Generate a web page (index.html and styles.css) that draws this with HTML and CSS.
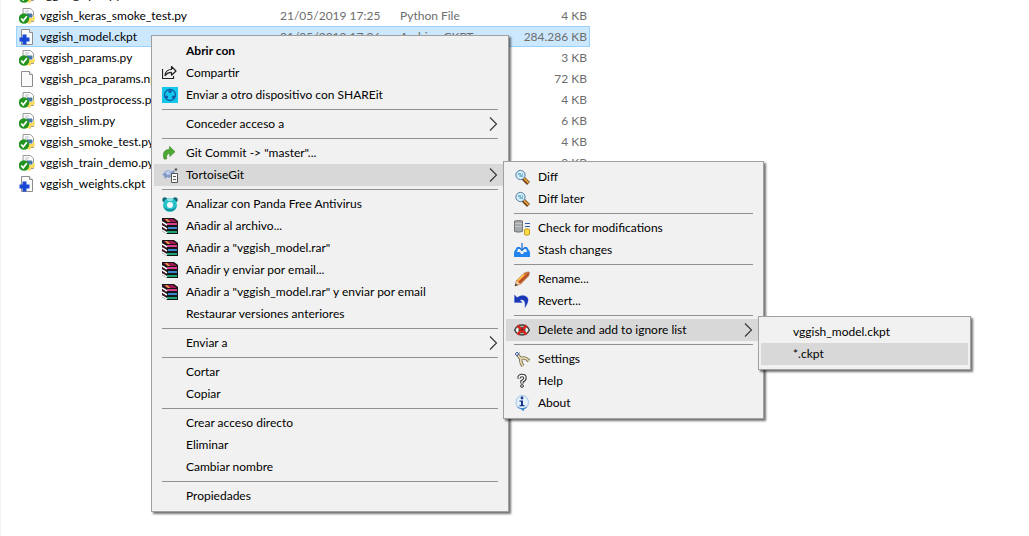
FILE: index.html
```html
<!DOCTYPE html>
<html lang="es">
<head>
<meta charset="utf-8">
<title>Explorador de archivos</title>
<link rel="stylesheet" href="styles.css">
</head>
<body>
<svg class="defs" aria-hidden="true">
  <symbol id="py" viewBox="0 0 16 16">
    <path d="M4 .5h7.500l3 3v10H4z" fill="#fbfbfb" stroke="#9a9a9a"/>
    <path d="M6 3h4M6 5h3" stroke="#b9c3cc"/>
    <path d="M8 5.500h4.500q1 0 1 1.500v2.500H9V11H6V8q0-1 2-1z" fill="#4377a3"/>
    <path d="M14 7.500q1.800 0 1.800 3t-1.800 2.500h-2v2.500H9q-1.500-.5-1.500-2.500V11q0-1 1.500-1h4q1 0 1-1z" fill="#f8dc5c"/>
    <circle cx="5" cy="10.500" r="5.200" fill="#239322"/>
    <path d="M2.200 10.500l2 2.300 3.600-4.600" fill="none" stroke="#fff" stroke-width="1.700"/>
  </symbol>
  <symbol id="page" viewBox="0 0 16 16">
    <path d="M2.500.5h8l3 3v12h-11z" fill="#fafafa" stroke="#8d8d8d"/>
    <path d="M10.500.5v3h3" fill="#fff" stroke="#8d8d8d"/>
  </symbol>
  <symbol id="added" viewBox="0 0 16 16">
    <path d="M2.500.5h8l3 3v12h-11z" fill="#fafafa" stroke="#8d8d8d"/>
    <path d="M10.500.5v3h3" fill="#fff" stroke="#8d8d8d"/>
    <path d="M3.500 5.500h4v3h3v4h-3v3h-4v-3h-3v-4h3z" fill="#1748d4"/>
  </symbol>
  <symbol id="share" viewBox="0 0 16 16">
    <path d="M.5 4v9.500h11V11" fill="none" stroke="#222" stroke-width="1.200"/>
    <path d="M3 10.500q.7-6 6.500-6V1.500L14 6l-4.500 4.200V7.500Q6 7.200 3 10.500z" fill="none" stroke="#222" stroke-width="1.200" stroke-linejoin="round"/>
  </symbol>
  <symbol id="shareit" viewBox="0 0 16 16">
    <path d="M0 0h16v16H0z" fill="#12c8ea"/>
    <circle cx="8" cy="8" r="5.500" fill="none" stroke="#1555a5" stroke-width="1.300"/>
    <circle cx="8" cy="4.500" r="1.600" fill="#1555a5"/><circle cx="4.500" cy="10" r="1.600" fill="#1555a5"/><circle cx="11.500" cy="10" r="1.600" fill="#1555a5"/>
  </symbol>
  <symbol id="commit" viewBox="0 0 16 16">
    <path d="M2 14Q-.5 4.500 7.500 4.500V1.500L13 6.700 7.800 11.500V8.500Q4 8.200 4.600 14z" fill="#4eaa32" stroke="#41852d" stroke-width=".7"/>
  </symbol>
  <symbol id="tortoise" viewBox="0 0 16 16">
    <ellipse cx="6" cy="6.500" rx="4" ry="3.500" fill="#a3b6dc"/>
    <path d="M0 7l3-1 6 3-1 2-3-1-2 2-1-3zM9 5l3-2 1 2-3 2z" fill="#8298c5"/>
    <path d="M4 5l4 2M7 4L5 8" stroke="#dbe3f3" stroke-width=".8"/>
    <circle cx="14" cy="2.500" r="1.300" fill="#555"/>
    <path d="M9.500 6.500h6v9h-6z" fill="#fafafa" stroke="#555"/>
    <path d="M11 9.500h3M11 12.500h3" stroke="#555"/>
  </symbol>
  <symbol id="panda" viewBox="0 0 16 16">
    <circle cx="2.800" cy="3.800" r="2.500" fill="#176b78"/><circle cx="13.200" cy="3.800" r="2.500" fill="#176b78"/>
    <circle cx="8" cy="9" r="5" fill="#f5fcfc" stroke="#28c3ca" stroke-width="4"/>
    <path d="M1.500 10a6.700 6.700 0 0 0 13 0q-2 3.500-6.500 3.500T1.500 10" fill="#14808f"/>
    <path d="M4.500 3.300Q8 1.300 11.500 3.300L10 5H6z" fill="#8ae4e6"/>
  </symbol>
  <symbol id="rar" viewBox="0 0 16 16">
    <path d="M0 0h12l4 3v13H5L0 13z" fill="#161616"/>
    <path d="M1 1h10l4 3H5z" fill="#a01850"/><path d="M3 1h2l3 3H6z" fill="#e8b33d"/>
    <path d="M5 5h10v2H5z" fill="#df3b91"/>
    <path d="M6 9h9v2H6z" fill="#3c86cf"/><path d="M5 13h10v2H5z" fill="#1ba574"/>
    <path d="M0 4l5 3M0 8l5 3M0 12l5 3" stroke="#fff" stroke-width="1.500"/>
    <path d="M0 5.500L4 8.200M0 9.500l4 2.700" stroke="#713" stroke-width=".8"/>
  </symbol>
  <symbol id="diff" viewBox="0 0 16 16">
    <path d="M9 9l5.500 5.500" stroke="#6a401b" stroke-width="4"/><path d="M9.500 8.800l5 5" stroke="#eea43c" stroke-width="1.700"/>
    <circle cx="6.500" cy="6" r="4.600" fill="#d4f1fb" stroke="#547a9f"/>
    <path d="M4 5h3M5.500 7H9M8 5h1" stroke="#297fab"/>
  </symbol>
  <symbol id="check" viewBox="0 0 16 16">
    <path d="M.5 1q4-1 8 0v10.500q-4 1.300-8 0z" fill="#a5a8aa" stroke="#777"/>
    <path d="M1 3.500h7M1 6.500h7" stroke="#c4c7c9"/>
    <path d="M11 3.500h5M11 6.500h5" stroke="#2860ae"/>
    <path d="M10.500 9.500q2.500-1.500 5 0v5q-2.500 1.500-5 0z" fill="#ffdc45" stroke="#c69c20"/>
  </symbol>
  <symbol id="stash" viewBox="0 0 16 16">
    <path d="M3 5h3v2H4L3 10h3l1 2h2l1-2h3l-1-3h-2V5h3l3 5v5H0v-5z" fill="#2284ee"/>
    <path d="M8 1v7M5.300 5.500L8 8.500l2.700-3" fill="none" stroke="#2675cf" stroke-width="1.300"/>
  </symbol>
  <symbol id="rename" viewBox="0 0 16 16">
    <path d="M1 15l1.500-5.500L10 2.500q2-1.500 5-1.500.5 2-.5 4l-8 8z" fill="#ed7a24" stroke="#875036" stroke-width=".7"/>
    <path d="M5.500 12.500l9-8.500V1.500l-4 4-6.500 6z" fill="#aa4930"/><path d="M3.500 9.500L10 3.500" stroke="#ffd15f" stroke-width="1.500"/>
    <path d="M1 15l1.500-5.500 4 3.500z" fill="#f2c998"/><path d="M1 15l.7-2.500L4 14z" fill="#333"/>
  </symbol>
  <symbol id="revert" viewBox="0 0 16 16">
    <path d="M.5 2v7.500h7.800L5.800 7Q12 5 11 14.500 17.500 5 10.500 2.800 6.500 2 3.200 4.600z" fill="#1936b4" stroke="#3555d5" stroke-width=".4"/>
  </symbol>
  <symbol id="ignore" viewBox="0 0 16 16">
    <path d="M.7 8Q3 3 8 3t7.300 5Q13 13 8 13T.7 8z" fill="#f4f4f4" stroke="#3c3c3c" stroke-width="1.400"/>
    <circle cx="8" cy="8" r="3.600" fill="#276b44"/><path d="M3.500 3.500l9 9M12.500 3.500l-9 9" stroke="#d72620" stroke-width="2.600"/>
    <circle cx="8" cy="7.500" r="1.300" fill="#8b1d1c"/>
  </symbol>
  <symbol id="settings" viewBox="0 0 16 16">
    <path d="M3 3l4 5q-1 3 2 7M7 7.500q4-2 8 2.500" fill="none" stroke="#766c55" stroke-width="3.400"/>
    <path d="M3 3l4 5q-1 3 2 7M7 7.500q4-2 8 2.500" fill="none" stroke="#e8d7a8" stroke-width="1.700"/>
    <path d="M1 3l2-2 2 2-2 2zM3 5l2.500-3.500" fill="#c2d0ef" stroke="#53679b"/>
  </symbol>
  <symbol id="help" viewBox="0 0 16 16">
    <path d="M5 5.500q0-3 3-3t3 2.500Q11 7 8 8.500v2" fill="none" stroke="#333" stroke-width="3.400"/>
    <path d="M5 5.200q0-2.700 3-2.700t3 2.500Q11 7 8 8.500v1.700" fill="none" stroke="#fff" stroke-width="1.300"/>
    <circle cx="8" cy="13" r="1.400" fill="#fff" stroke="#333"/>
  </symbol>
  <symbol id="about" viewBox="0 0 16 16">
    <path d="M8 .5a7.300 6.800 0 0 1 2 13L9.500 16 7 13.600A7.300 6.800 0 0 1 8 .5z" fill="#e4f1fd" stroke="#9cc2e8"/>
    <path d="M2.500 11.500q5.500 3.500 11 0-1 2-3.500 2.500L9.500 16 7 14q-3-.5-4.500-2.500z" fill="#2f78c4"/>
    <circle cx="8" cy="3" r="1.400" fill="#17378c"/><path d="M5.500 5.500H9V10h1.500v1.200h-5V10H7V6.700H5.500z" fill="#17378c"/>
  </symbol>
  <symbol id="arrow" viewBox="0 0 16 16">
    <path d="M5 1.500L11.500 8 5 14.500" fill="none" stroke="#333" stroke-width="1.100"/>
  </symbol>
</svg>

<main class="explorer">
  <table class="files">
    <colgroup><col class="col-name"><col class="col-date"><col class="col-type"><col class="col-size"></colgroup>
    <tbody>
      <tr><td><span class="file"><svg><use href="#py"/></svg>vggish_input.py</span></td><td></td><td></td><td></td></tr>
      <tr><td><span class="file"><svg><use href="#py"/></svg>vggish_keras_smoke_test.py</span></td><td>21/05/2019 17:25</td><td>Python File</td><td>4 KB</td></tr>
      <tr class="selected"><td><span class="file"><svg><use href="#added"/></svg>vggish_model.ckpt</span></td><td>21/05/2019 17:26</td><td>Archivo CKPT</td><td>284.286 KB</td></tr>
      <tr><td><span class="file"><svg><use href="#py"/></svg>vggish_params.py</span></td><td></td><td></td><td>3 KB</td></tr>
      <tr><td><span class="file"><svg><use href="#page"/></svg>vggish_pca_params.npz</span></td><td></td><td></td><td>72 KB</td></tr>
      <tr><td><span class="file"><svg><use href="#py"/></svg>vggish_postprocess.py</span></td><td></td><td></td><td>4 KB</td></tr>
      <tr><td><span class="file"><svg><use href="#py"/></svg>vggish_slim.py</span></td><td></td><td></td><td>6 KB</td></tr>
      <tr><td><span class="file"><svg><use href="#py"/></svg>vggish_smoke_test.py</span></td><td></td><td></td><td>4 KB</td></tr>
      <tr><td><span class="file"><svg><use href="#py"/></svg>vggish_train_demo.py</span></td><td></td><td></td><td>9 KB</td></tr>
      <tr><td><span class="file"><svg><use href="#added"/></svg>vggish_weights.ckpt</span></td><td></td><td></td><td></td></tr>
    </tbody>
  </table>

  <ul class="menu context">
    <li><button class="item default"><span class="icon"></span>Abrir con</button></li>
    <li><button class="item"><svg class="icon"><use href="#share"/></svg>Compartir</button></li>
    <li><button class="item"><svg class="icon"><use href="#shareit"/></svg>Enviar a otro dispositivo con SHAREit</button></li>
    <li class="separator"></li>
    <li><button class="item"><span class="icon"></span>Conceder acceso a<svg class="arrow"><use href="#arrow"/></svg></button></li>
    <li class="separator"></li>
    <li><button class="item"><svg class="icon"><use href="#commit"/></svg>Git Commit -&gt; "master"...</button></li>
    <li class="parent">
      <button class="item active"><svg class="icon"><use href="#tortoise"/></svg>TortoiseGit<svg class="arrow"><use href="#arrow"/></svg></button>
      <ul class="menu submenu git">
        <li><button class="item"><svg class="icon"><use href="#diff"/></svg>Diff</button></li>
        <li><button class="item"><svg class="icon"><use href="#diff"/></svg>Diff later</button></li>
        <li class="separator"></li>
        <li><button class="item"><svg class="icon"><use href="#check"/></svg>Check for modifications</button></li>
        <li><button class="item"><svg class="icon"><use href="#stash"/></svg>Stash changes</button></li>
        <li class="separator"></li>
        <li><button class="item"><svg class="icon"><use href="#rename"/></svg>Rename...</button></li>
        <li><button class="item"><svg class="icon"><use href="#revert"/></svg>Revert...</button></li>
        <li class="separator"></li>
        <li class="parent">
          <button class="item active"><svg class="icon"><use href="#ignore"/></svg>Delete and add to ignore list<svg class="arrow"><use href="#arrow"/></svg></button>
          <ul class="menu submenu ignore">
            <li><button class="item"><span class="icon"></span>vggish_model.ckpt</button></li>
            <li><button class="item active"><span class="icon"></span>*.ckpt</button></li>
          </ul>
        </li>
        <li class="separator"></li>
        <li><button class="item"><svg class="icon"><use href="#settings"/></svg>Settings</button></li>
        <li><button class="item"><svg class="icon"><use href="#help"/></svg>Help</button></li>
        <li><button class="item"><svg class="icon"><use href="#about"/></svg>About</button></li>
      </ul>
    </li>
    <li class="separator"></li>
    <li><button class="item"><svg class="icon"><use href="#panda"/></svg>Analizar con Panda Free Antivirus</button></li>
    <li><button class="item"><svg class="icon"><use href="#rar"/></svg>Añadir al archivo...</button></li>
    <li><button class="item"><svg class="icon"><use href="#rar"/></svg>Añadir a "vggish_model.rar"</button></li>
    <li><button class="item"><svg class="icon"><use href="#rar"/></svg>Añadir y enviar por email...</button></li>
    <li><button class="item"><svg class="icon"><use href="#rar"/></svg>Añadir a "vggish_model.rar" y enviar por email</button></li>
    <li><button class="item"><span class="icon"></span>Restaurar versiones anteriores</button></li>
    <li class="separator"></li>
    <li><button class="item"><span class="icon"></span>Enviar a<svg class="arrow"><use href="#arrow"/></svg></button></li>
    <li class="separator"></li>
    <li><button class="item"><span class="icon"></span>Cortar</button></li>
    <li><button class="item"><span class="icon"></span>Copiar</button></li>
    <li class="separator"></li>
    <li><button class="item"><span class="icon"></span>Crear acceso directo</button></li>
    <li><button class="item"><span class="icon"></span>Eliminar</button></li>
    <li><button class="item"><span class="icon"></span>Cambiar nombre</button></li>
    <li class="separator"></li>
    <li><button class="item"><span class="icon"></span>Propiedades</button></li>
  </ul>
</main>
</body>
</html>
```
FILE: styles.css
```css
* { box-sizing: border-box; }
body {
  margin: 0;
  background: #fff;
  color: #000;
  font: 12px/20px Lato, "Open Sans", sans-serif;
}
.defs { position: absolute; width: 0; height: 0; }
.explorer {
  position: relative;
  min-height: 100vh;
  overflow: hidden;
  border-left: 1px solid #f3f3f3;
}

/* File list */
.files {
  width: 574px;
  margin: -16px 0 0 15px;
  border-collapse: separate;
  border-spacing: 0;
  table-layout: fixed;
}
.col-name { width: 261px; }
.col-date { width: 120px; }
.col-type { width: 103px; }
.files tr { height: 21px; }
.files td {
  padding: 0 3px;
  border: 0 solid #99d1ff;
  color: #6d6d6d;
  line-height: 19px;
  white-space: nowrap;
}
.files td:first-child { color: #000; }
.files td:last-child { text-align: right; }
.files .selected td { background: #cce8ff; border-width: 1px 0; }
.files .selected td:first-child { box-shadow: inset 1px 0 #99d1ff; }
.files .selected td:last-child { box-shadow: inset -1px 0 #99d1ff; }
.file { display: flex; align-items: center; gap: 5px; }
.file svg { width: 16px; height: 16px; }

/* Menus */
.menu {
  position: absolute;
  margin: 0;
  padding: 4px 2px;
  list-style: none;
  background: #f1f1f1;
  border: 1px solid #a0a0a0;
  box-shadow: 2px 2px 2px rgba(0, 0, 0, .55);
}
.context { left: 150px; top: 35px; width: 358px; }
.submenu { left: calc(100% - 3px); top: -3px; z-index: 1; }
.git { width: 261px; }
.ignore { width: 213px; }
.parent { position: relative; }
.item {
  display: flex;
  align-items: center;
  gap: 8px;
  width: 100%;
  height: 22px;
  padding: 0 5px 0 8px;
  border: 0;
  background: none;
  color: inherit;
  font: inherit;
  text-align: left;
  white-space: nowrap;
}
.item.active { background: #d8d8d8; }
.item.default { font-weight: 700; }
.icon { flex: none; width: 16px; height: 16px; }
.arrow { width: 16px; height: 16px; margin-left: auto; }
.separator {
  height: 7px;
  padding: 3px 8px;
}
.separator::before { content: ""; display: block; height: 1px; background: #919191; }
```
